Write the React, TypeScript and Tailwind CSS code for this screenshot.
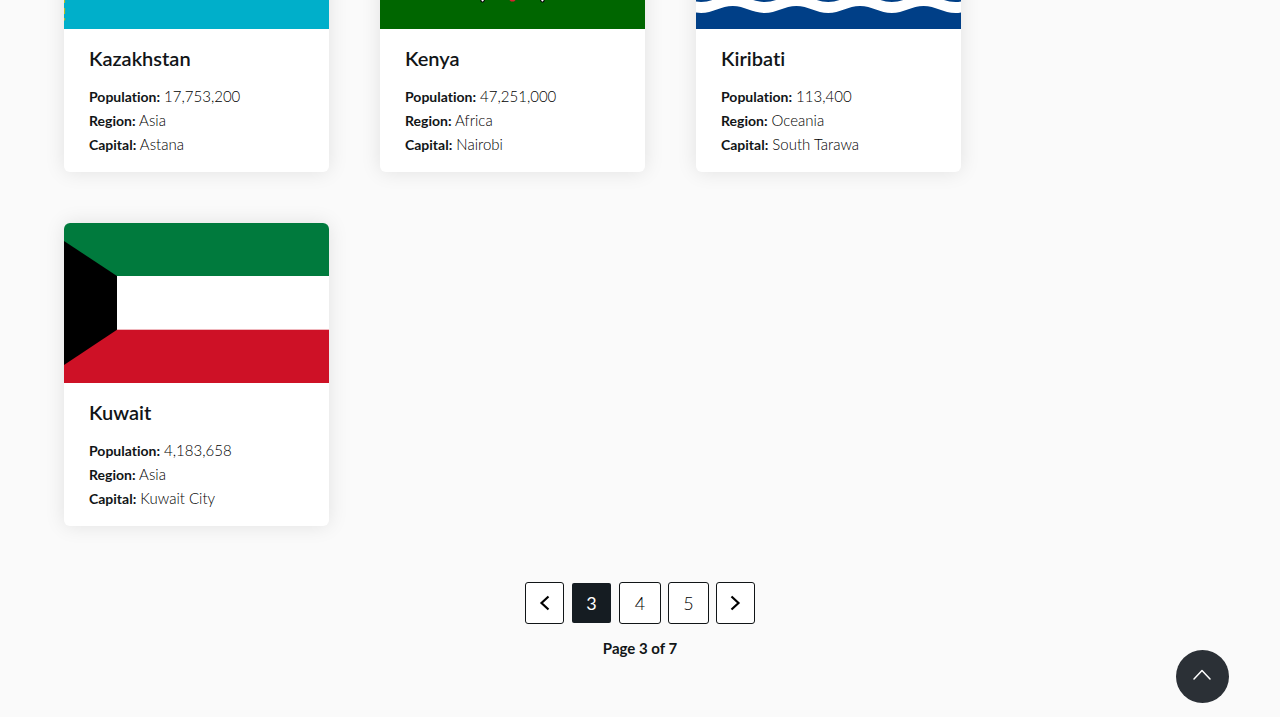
import React from "react";

function wave(y: number): string {
  const half = 31.8;
  const handle = half * 0.3642;
  let x = -26.8;
  let low = false;
  let d = `M${x} ${y - 3.5}`;
  while (x < 290) {
    const from = low ? y + 3.5 : y - 3.5;
    const to = low ? y - 3.5 : y + 3.5;
    d += ` C${x + handle} ${from} ${x + half - handle} ${to} ${x + half} ${to}`;
    x += half;
    low = !low;
  }
  return `${d} V160 H-27 Z`;
}

function KazakhstanFlag() {
  return (
    <svg viewBox="0 0 265 160" className="block h-40 w-full" aria-hidden="true">
      <rect width="265" height="160" fill="#00afca" />
      <circle cx="132" cy="62" r="24" fill="#fec50c" />
      <path d="M86 82 C100 108 165 108 179 82 C164 96 101 96 86 82Z" fill="#fec50c" />
      <path
        d="M0.500 8 V20 M0.500 28 V44 M0.500 52 V64 M0.500 72 V88 M0.500 96 V110 M0.500 118 V126 M0.500 130 V134 M0.500 139 V145 M0.500 149 V151.500"
        stroke="#b5bd2e"
        strokeWidth="1.2"
        fill="none"
      />
    </svg>
  );
}

function KenyaFlag() {
  return (
    <svg viewBox="0 0 265 160" className="block h-40 w-full" aria-hidden="true">
      <rect width="265" height="160" fill="#006600" />
      <rect width="265" height="112" fill="#fff" />
      <rect width="265" height="48" fill="#000" />
      <rect y="53" width="265" height="54" fill="#bb0000" />
      <g stroke="#000" strokeWidth="4" strokeLinecap="round">
        <path d="M162 28 L102.500 131.500" />
        <path d="M103 28 L162.500 131.500" />
      </g>
      <g stroke="#fff" strokeWidth="2" strokeLinecap="round">
        <path d="M162 28 L102.500 131.500" />
        <path d="M103 28 L162.500 131.500" />
      </g>
      <path d="M132.500 27 C164 55 164 105 134 132.500 H131 C101 105 101 55 132.500 27Z" fill="#d8232f" />
      <path d="M132.500 30 V130" stroke="#fff" strokeWidth="0.8" />
    </svg>
  );
}

function KiribatiFlag() {
  const bands = [
    { y: 85.5, color: "#ffffff" },
    { y: 96.5, color: "#003f87" },
    { y: 107.5, color: "#ffffff" },
    { y: 118.5, color: "#003f87" },
    { y: 129.5, color: "#ffffff" },
    { y: 140.5, color: "#003f87" },
  ];
  return (
    <svg viewBox="0 0 265 160" className="block h-40 w-full" aria-hidden="true">
      <rect width="265" height="160" fill="#ce1126" />
      <circle cx="132.500" cy="82" r="27" fill="#fcd116" />
      {bands.map((band) => (
        <path key={band.y} d={wave(band.y)} fill={band.color} />
      ))}
    </svg>
  );
}

function KuwaitFlag() {
  return (
    <svg viewBox="0 0 265 160" className="block h-40 w-full" aria-hidden="true">
      <rect width="265" height="160" fill="#fff" />
      <rect width="265" height="53" fill="#007a3d" />
      <rect y="106.700" width="265" height="53.300" fill="#ce1126" />
      <path d="M0 18 L53 53 V106.700 L0 142 Z" fill="#000" />
    </svg>
  );
}

interface Country {
  name: string;
  population: string;
  region: string;
  capital: string;
  Flag: () => React.JSX.Element;
}

const countries: Country[] = [
  { name: "Kazakhstan", population: "17,753,200", region: "Asia", capital: "Astana", Flag: KazakhstanFlag },
  { name: "Kenya", population: "47,251,000", region: "Africa", capital: "Nairobi", Flag: KenyaFlag },
  { name: "Kiribati", population: "113,400", region: "Oceania", capital: "South Tarawa", Flag: KiribatiFlag },
  { name: "Kuwait", population: "4,183,658", region: "Asia", capital: "Kuwait City", Flag: KuwaitFlag },
];

function Detail({ label, value }: { label: string; value: string }) {
  return (
    <p className="text-[15px] leading-6 font-light text-black">
      <span className="text-[14px] leading-none font-bold text-[#111517]">{label}:</span> {value}
    </p>
  );
}

function CountryCard({ name, population, region, capital, Flag }: Country) {
  return (
    <a
      href={`#${name.toLowerCase()}`}
      className="block overflow-hidden rounded-md bg-white shadow-[0_0_20px_rgba(0,0,0,0.1)]"
    >
      <Flag />
      <div className="px-[25px] pt-[15px] pb-4">
        <h2 className="mb-3 text-[20px] leading-7 font-semibold">{name}</h2>
        <Detail label="Population" value={population} />
        <Detail label="Region" value={region} />
        <Detail label="Capital" value={capital} />
      </div>
    </a>
  );
}

const pageButton =
  "flex h-[42px] items-center justify-center rounded-[3px] border border-[#111517] bg-white text-[18px] font-light text-black";

export default function App() {
  return (
    <div className="min-h-screen overflow-hidden bg-[#fafafa] font-[Lato,'Open_Sans',sans-serif] text-[#111517] [font-variant-ligatures:none]">
      <main className="-mt-[131px] px-[5%] pb-14">
        <section className="grid grid-cols-[repeat(auto-fill,265px)] gap-[51px]">
          {countries.map((country) => (
            <CountryCard key={country.name} {...country} />
          ))}
        </section>
        <nav aria-label="Pagination" className="mt-14 flex flex-col items-center gap-3">
          <div className="flex gap-[7px]">
            <button aria-label="Previous page" className={`${pageButton} w-[39px]`}>
              <svg width="12" height="16" viewBox="0 0 12 16" fill="none" stroke="currentColor" strokeWidth="2.200">
                <path d="M9.500 1.500 L2.500 8 L9.500 14.500" />
              </svg>
            </button>
            <button
              aria-current="page"
              className="flex h-[42px] w-[41px] items-center justify-center rounded-[3px] border border-transparent bg-[#151c22] bg-clip-padding text-[18px] text-white"
            >
              3
            </button>
            <button className={`${pageButton} w-[42px]`}>4</button>
            <button className={`${pageButton} w-[41px]`}>5</button>
            <button aria-label="Next page" className={`${pageButton} w-[39px]`}>
              <svg width="12" height="16" viewBox="0 0 12 16" fill="none" stroke="currentColor" strokeWidth="2.200">
                <path d="M1.500 1.500 L8.500 8 L1.500 14.500" />
              </svg>
            </button>
          </div>
          <p className="text-[15px] leading-6 font-bold">Page 3 of 7</p>
        </nav>
      </main>
      <button
        aria-label="Back to top"
        className="fixed right-[51px] bottom-3.5 flex size-[53px] items-center justify-center rounded-full bg-[#2b3036] text-white"
      >
        <svg
          width="20"
          height="20"
          viewBox="0 0 20 20"
          fill="none"
          stroke="currentColor"
          strokeWidth="1.500"
          strokeLinecap="round"
          strokeLinejoin="round"
        >
          <path d="M1 12 L9 3.500 L17 12" />
        </svg>
      </button>
    </div>
  );
}
